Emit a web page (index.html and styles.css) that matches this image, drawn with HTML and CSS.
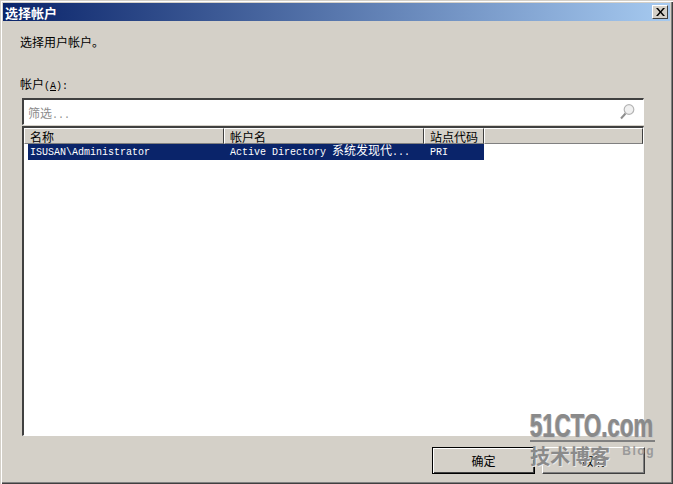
FILE: index.html
```html
<html>
<head>
    <meta charset="utf-8">
    <link rel="stylesheet" href="styles.css">
</head>
<body>
<div class="dialog">
    <div class="title-bar">
        <span class="title-text">选择帐户</span>
        <button class="btn-close">
            <svg width="9" height="8" viewBox="0 0 9 8"><path d="M0 0h2l2.500 3 2.500-3h2L5.500 4 9 8H7L4.500 5 2 8H0l3.500-4z" fill="#000"/></svg>
        </button>
    </div>
    <div class="dialog-body">
        <p class="hint">选择用户帐户。</p>
        <label class="field-label">帐户<span class="latin">(<u>A</u>):</span></label>
        <div class="filter-box">
            <span class="filter-text">筛选<span class="latin">...</span></span>
            <svg class="icon-search" width="16" height="18" viewBox="0 0 16 18">
                <circle cx="10" cy="6.500" r="4.800" fill="#f0f0f0" stroke="#b4b4b4" stroke-width="1.200"/>
                <path d="M6.500 10.500L2 15.500" stroke="#8f8f8f" stroke-width="2" fill="none"/>
            </svg>
        </div>
        <div class="account-list">
            <div class="list-head">
                <span class="col col-name">名称</span>
                <span class="col col-account">帐户名</span>
                <span class="col col-site">站点代码</span>
                <span class="col col-rest"></span>
            </div>
            <div class="list-row">
                <span class="cell cell-name">ISUSAN\Administrator</span>
                <span class="cell cell-account">Active Directory <span class="cjk">系统发现代</span>...</span>
                <span class="cell cell-site">PRI</span>
            </div>
        </div>
        <div class="btn-group">
            <button class="btn btn-ok">确定</button>
            <button class="btn btn-cancel">取消</button>
        </div>
    </div>
    <div class="watermark">
        <div class="wm-logo"><span class="wm-logo-text">51CTO.com</span></div>
        <div class="wm-sub"><span class="wm-cn">技术博客</span><span class="wm-blog">Blog</span></div>
    </div>
</div>
</body>
</html>
```

FILE: styles.css
```css
html, body{
    margin: 0;
    padding: 0;
    background: #d4d0c8;
}
.dialog{
    position: relative;
    width: 673px;
    height: 484px;
    box-sizing: border-box;
    padding: 3px 3px 2px 3px;
    display: flex;
    flex-direction: column;
    background: #d4d0c8;
    box-shadow: inset 1px 1px 0 #d4d0c8, inset 2px 2px 0 #fff, inset -1px -1px 0 #404040, inset -2px -2px 0 #808080;
    font-family: "Noto Sans CJK SC", "Liberation Sans", sans-serif;
    font-size: 12px;
    color: #000;
    overflow: hidden;
}
.latin{
    font-family: "Liberation Mono", monospace;
    font-size: 10px;
}
.cjk{
    font-family: "Noto Sans CJK SC", sans-serif;
    font-size: 12px;
    line-height: 10px;
}
.title-bar{
    height: 18px;
    flex: none;
    display: flex;
    align-items: center;
    justify-content: space-between;
    padding: 0 2px 0 2px;
    background: linear-gradient(to right, #0a246a, #a6caf0);
}
.title-text{
    color: #fff;
    font-size: 13px;
    font-weight: bold;
}
.btn-close{
    width: 16px;
    height: 14px;
    padding: 0;
    display: flex;
    align-items: center;
    justify-content: center;
    background: #d4d0c8;
    border: 1px solid;
    border-color: #fff #404040 #404040 #fff;
}
.dialog-body{
    flex: 1;
    display: flex;
    flex-direction: column;
    padding: 12px 25px 8px 17px;
}
.hint{
    margin: 0;
    height: 18px;
    line-height: 18px;
}
.field-label{
    margin-top: 24px;
    height: 18px;
    line-height: 18px;
}
.filter-box{
    margin: 5px 1px 0 2px;
    height: 27px;
    box-sizing: border-box;
    display: flex;
    align-items: center;
    justify-content: space-between;
    padding: 0 8px 0 4px;
    background: #fff;
    border-style: solid;
    border-width: 2px 1px 1px 2px;
    border-color: #404040 #fff #fff #404040;
}
.filter-text{
    color: #8c8c8c;
}
.account-list{
    margin: 1px 1px 0 2px;
    height: 310px;
    flex: none;
    box-sizing: border-box;
    background: #fff;
    border-style: solid;
    border-width: 2px 1px 1px 2px;
    border-color: #404040 #fff #fff #404040;
}
.list-head{
    display: flex;
    height: 16px;
}
.col{
    box-sizing: border-box;
    height: 16px;
    line-height: 15px;
    padding-left: 5px;
    background: #d4d0c8;
    border: 1px solid;
    border-color: #fff #404040 #808080 #fff;
}
.col-name{
    width: 200px;
}
.col-account{
    width: 200px;
}
.col-site{
    width: 60px;
}
.col-rest{
    flex: 1;
}
.list-row{
    display: flex;
    width: 456px;
    height: 16px;
    margin-left: 4px;
    background: #0a246a;
    color: #fff;
    font-family: "Liberation Mono", "Noto Sans CJK SC", monospace;
    font-size: 10px;
    line-height: 18px;
}
.cell{
    padding-left: 2px;
    white-space: nowrap;
}
.cell-name{
    width: 198px;
}
.cell-account{
    width: 198px;
}
.cell-site{
    width: 50px;
}
.btn-group{
    margin-top: auto;
    display: flex;
    justify-content: flex-end;
    gap: 7px;
}
.btn{
    width: 103px;
    height: 27px;
    padding: 0;
    background: #d4d0c8;
    font-family: "Noto Sans CJK SC", sans-serif;
    font-size: 12px;
    border: 1px solid;
    border-color: #fff #404040 #404040 #fff;
    box-shadow: inset -1px -1px 0 #808080;
}
.btn-ok{
    border-color: #000;
    box-shadow: inset 1px 1px 0 #fff, inset -1px -1px 0 #404040;
}
/* the logo over the buttons */
.watermark{
    position: absolute;
    left: 530px;
    top: 410px;
    width: 125px;
}
.wm-logo{
    height: 30px;
    border-bottom: 2px solid #808080;
}
.wm-logo-text{
    display: inline-block;
    font-family: "Liberation Sans", sans-serif;
    font-size: 34px;
    font-weight: bold;
    line-height: 30px;
    color: #8a8a8a;
    text-shadow: 1px 1px 0 #c8c8c8, -1px 0 0 #b0b0b0;
    white-space: nowrap;
    transform: scaleX(0.655);
    transform-origin: left;
}
.wm-sub{
    display: flex;
    justify-content: space-between;
    margin-top: 2px;
}
.wm-cn{
    font-size: 20px;
    line-height: 24px;
    font-weight: bold;
    color: #8a8a8a;
    text-shadow: 1px 1px 0 #e8e8e8;
}
.wm-blog{
    font-family: "Liberation Sans", sans-serif;
    font-size: 12px;
    font-weight: bold;
    line-height: 14px;
    letter-spacing: 1.500px;
    color: #9a9a9a;
}
```
